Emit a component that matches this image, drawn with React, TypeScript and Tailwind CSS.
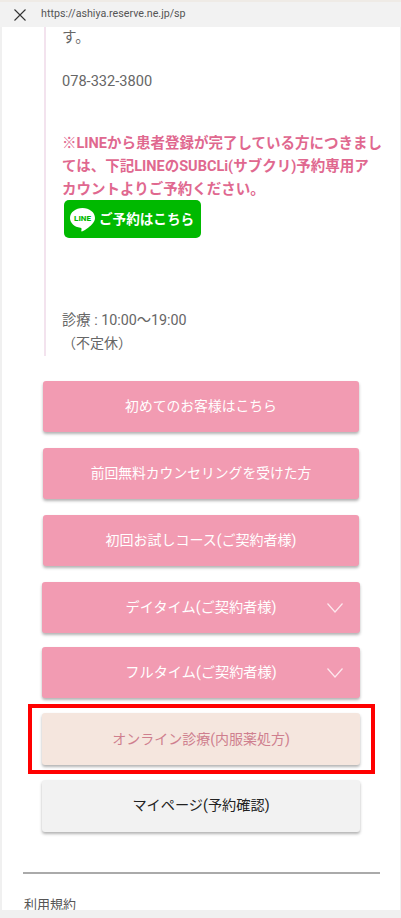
import React from "react";

function Btn({ label, chevron, cls }: { label: string; chevron?: boolean; cls: string }) {
  return (
    <div className={`relative flex items-center justify-center rounded-[3px] shadow-[0_2px_3px_rgba(0,0,0,0.3)] ${cls}`}>
      <span>{label}</span>
      {chevron && (
        <svg className="absolute right-[17px] top-[21px]" width="16" height="10" viewBox="0 0 16 10" fill="none" stroke="#fde8ee" strokeWidth="1.2">
          <path d="M0.5 0.5 L8 9 L15.500 0.5" />
        </svg>
      )}
    </div>
  );
}

export default function App() {
  return (
    <div className="relative h-[918px] w-[401px] overflow-hidden bg-[#f0f0f0] pl-[2px] pr-[1px] font-['Roboto','Noto_Sans_CJK_JP',sans-serif] text-[#666]">
      <div className="-mx-[2px] h-[2px] bg-[#efebe6]" />
      <div className="-mx-[2px] flex h-[25px] items-center bg-[#f2f2f2] pl-[14px]">
        <svg width="12" height="12" viewBox="0 0 12 12" stroke="#333" strokeWidth="1.1" fill="none">
          <path d="M0.5 0.5 L11.5 11.5 M11.5 0.5 L0.5 11.5" />
        </svg>
        <span className="ml-[15px] text-[10.7px] text-[#555]">https://ashiya.reserve.ne.jp/sp</span>
      </div>
      <div className="h-[883px] overflow-hidden bg-white">
        <div className="ml-[42px] h-[329px] border-l-2 border-[#f3e3ee] pl-[16px] text-[14.6px]">
          <p className="h-[26px] leading-[20px]">す。</p>
          <p className="mt-[18px] leading-[20px]">078-332-3800</p>
          <p className="mt-[41px] whitespace-nowrap text-[14.5px] font-bold leading-[23px] text-[#e0688f]">
            ※LINEから患者登録が完了している方につきまし
            <br />
            ては、下記LINEのSUBCLi(サブクリ)予約専用ア
            <br />
            カウントよりご予約ください。
          </p>
          <div className="ml-[2px] mt-[-1px] flex h-[38px] w-[137px] items-center gap-[3px] rounded-[5px] bg-[#00b900] pl-[5px] text-[13.6px] font-bold text-white">
            <svg width="27" height="27" viewBox="0 0 27 27">
              <path d="M13.5 2C6.6 2 1 6.4 1 12c0 5 4.400 9 10.400 9.800.4.100 1 .3 1.100.6.100.3.100.8 0 1.100l-.2 1.100c0 .3-.2 1.300 1.100.7 1.300-.6 7-4.100 9.600-7.100C24.800 16.300 26 14.300 26 12 26 6.400 20.400 2 13.500 2z" fill="#fff" />
              <text x="13.500" y="15" textAnchor="middle" fontSize="8" fontWeight="800" fill="#00b900" fontFamily="Roboto">LINE</text>
            </svg>
            <span>ご予約はこちら</span>
          </div>
          <p className="mt-[71px] text-[14.3px] leading-[23px]">診療 : 10:00〜19:00</p>
          <p className="text-[14px] leading-[23px]">（不定休）</p>
        </div>
        <div className="flex flex-col items-center pt-[25px]">
          <Btn label="初めてのお客様はこちら" cls="h-[51px] w-[316px] bg-[#f29bb2] text-[13.8px] text-white" />
          <Btn label="前回無料カウンセリングを受けた方" cls="mt-[16px] h-[51px] w-[316px] bg-[#f29bb2] text-[13.8px] text-white" />
          <Btn label="初回お試しコース(ご契約者様)" cls="mt-[16px] h-[51px] w-[316px] bg-[#f29bb2] text-[14px] text-white" />
          <Btn label="デイタイム(ご契約者様)" chevron cls="mt-[16px] h-[51px] w-[318px] bg-[#f29bb2] text-[14.2px] text-white" />
          <Btn label="フルタイム(ご契約者様)" chevron cls="mt-[14px] h-[51px] w-[318px] bg-[#f29bb2] text-[14.2px] text-white" />
          <Btn label="オンライン診療(内服薬処方)" cls="mt-[15px] h-[52px] w-[318px] bg-[#f5e6de] text-[14px] text-[#cf7f8e]" />
          <Btn label="マイページ(予約確認)" cls="mt-[15px] h-[52px] w-[318px] bg-[#f2f2f2] text-[14.2px] text-[#222]" />
        </div>
        <div className="ml-[21px] mr-[20px] mt-[40px] h-[2px] bg-[#aaa]" />
        <p className="ml-[22px] mt-[21px] text-[13px] leading-[20px] text-[#555]">利用規約</p>
      </div>
      <div className="pointer-events-none absolute left-[28px] top-[704px] h-[70px] w-[347px] border-[4px] border-[#f00]" />
    </div>
  );
}
